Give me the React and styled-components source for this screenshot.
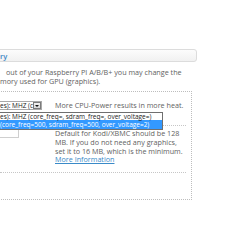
import React from "react";
import styled, { createGlobalStyle } from "styled-components";

const Global = createGlobalStyle`
  html, body { margin: 0; padding: 0; background: #fff; }
  body { font-family: "Open Sans", "DejaVu Sans", sans-serif; color: #626262; }
`;

const Page = styled.div`
  width: 250px;
  height: 250px;
  overflow: hidden;
  padding-top: 49px;
  box-sizing: border-box;
`;

const SectionHeader = styled.div`
  margin-left: -4px;
  width: 201px;
  height: 13px;
  box-sizing: border-box;
  border: 1px solid #dcdcdc;
  border-radius: 3px;
  background: linear-gradient(#fcfcfc, #f1f1f1);
  display: flex;
  align-items: center;
  padding-left: 3px;
  font-size: 7.5px;
  font-weight: 600;
  color: #3b86c6;
`;

const Intro = styled.div`
  margin-top: 6px;
  font-size: 7.2px;
  line-height: 9px;
  white-space: nowrap;
`;

const IntroLine = styled.div`
  padding-left: ${(p) => p.$indent || 0}px;
`;

const Box = styled.div`
  margin-top: 5px;
  margin-left: -4px;
  width: 196px;
  height: 109px;
  box-sizing: border-box;
  border: 1px dotted #bdbdbd;
  padding: 0 5px 0 3px;
`;

const Row = styled.div`
  display: grid;
  grid-template-columns: 55px 1fr;
  padding: ${(p) => p.$pad};
  border-bottom: 1px dotted #c6c6c6;
`;

const Cell = styled.div`
  position: relative;
`;

const Help = styled.div`
  font-size: 7.2px;
  white-space: nowrap;
`;

const HelpLine = styled.div`
  height: ${(p) => p.$lh || 9}px;
  line-height: ${(p) => p.$lh || 9}px;
`;

const Link = styled.a`
  color: #3a8ac8;
  text-decoration: underline;
`;

const SelectBox = styled.div`
  position: relative;
  display: flex;
  align-items: stretch;
  width: 42px;
  height: 9px;
  box-sizing: border-box;
  border: 1px solid #a9a9a9;
  border-left: none;
  background: #fff;
`;

const SelectValue = styled.div`
  flex: 1;
  white-space: nowrap;
  font-size: 6.5px;
  line-height: 7px;
  color: #222;
`;

const ArrowButton = styled.div`
  width: 8px;
  box-sizing: border-box;
  border: 1px solid #7b7b7b;
  background: linear-gradient(#f2f2f2, #d8d8d8);
  display: flex;
  align-items: center;
  justify-content: center;
`;

const Arrow = styled.span`
  width: 0;
  height: 0;
  border-left: 2px solid transparent;
  border-right: 2px solid transparent;
  border-top: 2px solid #111;
`;

const Dropdown = styled.div`
  position: absolute;
  top: 10px;
  left: -4px;
  width: 167px;
  box-sizing: border-box;
  border: 1px solid #6f6f6f;
  background: #fff;
  z-index: 5;
`;

const Option = styled.div`
  height: ${(p) => p.$h}px;
  line-height: ${(p) => p.$h}px;
  padding-left: 3px;
  font-size: 6.5px;
  white-space: nowrap;
  color: ${(p) => (p.$active ? "#fff" : "#222")};
  background: ${(p) => (p.$active ? "#3399ff" : "#fff")};
`;

const TextInput = styled.div`
  margin-left: -10px;
  margin-top: -1px;
  width: 29px;
  height: 10px;
  box-sizing: border-box;
  border: 1px solid #cfcfcf;
  background: #fff;
`;

export default function App() {
  return (
    <>
      <Global />
      <Page>
        <SectionHeader>ry</SectionHeader>
        <Intro>
          <IntroLine $indent={6}>out of your Raspberry PI A/B/B+ you may change the</IntroLine>
          <IntroLine>mory used for GPU (graphics).</IntroLine>
        </Intro>
        <Box>
          <Row $pad="9px 0 15px">
            <Cell>
              <SelectBox>
                <SelectValue>es): MHZ (c</SelectValue>
                <ArrowButton>
                  <Arrow />
                </ArrowButton>
                <Dropdown>
                  <Option $h={7}>es): MHZ (core_freq=, sdram_freq=, over_voltage=)</Option>
                  <Option $h={9} $active>(core_freq=500, sdram_freq=500, over_voltage=2)</Option>
                </Dropdown>
              </SelectBox>
            </Cell>
            <Help>
              <HelpLine>More CPU-Power results in more heat.</HelpLine>
            </Help>
          </Row>
          <Row $pad="3px 0 8px">
            <Cell>
              <TextInput />
            </Cell>
            <Help>
              <HelpLine $lh={8.8}>Default for Kodi/XBMC should be 128</HelpLine>
              <HelpLine $lh={8.8}>MB. If you do not need any graphics,</HelpLine>
              <HelpLine $lh={8.8}>set it to 16 MB, which is the minimum.</HelpLine>
              <HelpLine $lh={8.8}>
                <Link href="#">More Information</Link>
              </HelpLine>
            </Help>
          </Row>
        </Box>
      </Page>
    </>
  );
}
